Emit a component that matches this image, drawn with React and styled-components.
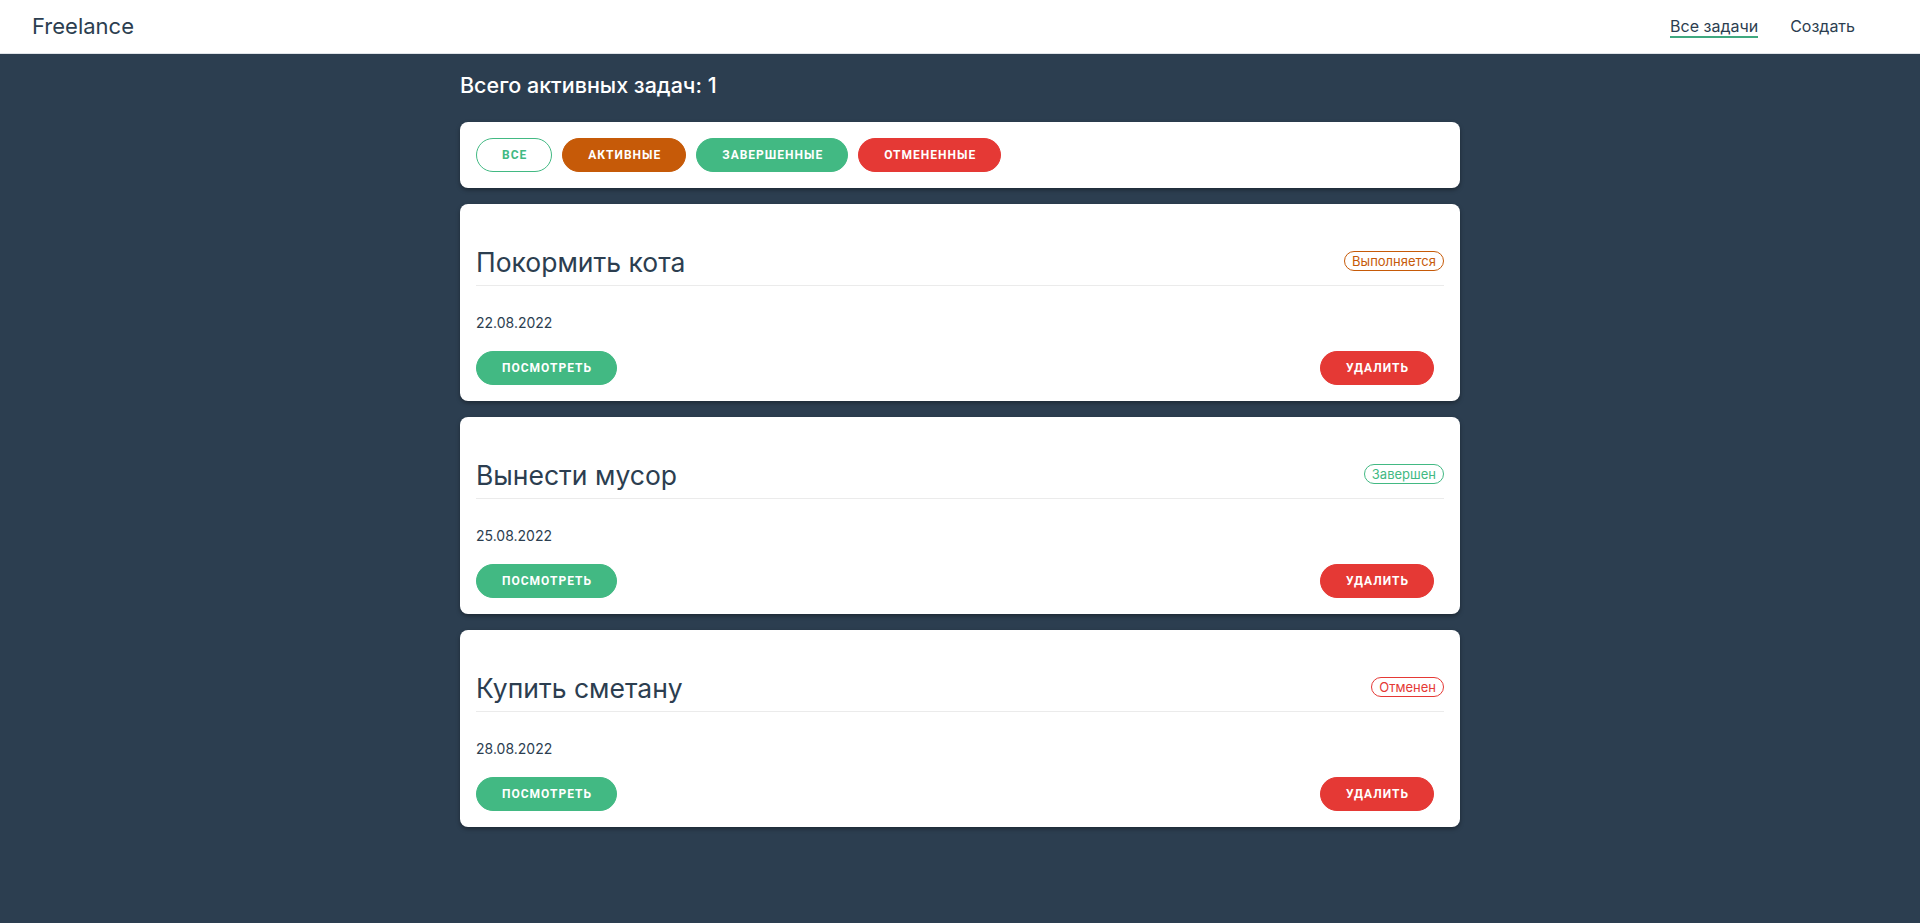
import React from 'react';
import styled, {createGlobalStyle} from 'styled-components';

const colors = {
    dark: '#2c3e50',
    green: '#42b983',
    orange: '#c65a08',
    red: '#e53935',
    line: '#ebebeb',
};

const GlobalStyle = createGlobalStyle`
    html,
    body {
        margin: 0;
        padding: 0;
        background: ${colors.dark};
        font-family: Inter, 'Noto Sans', sans-serif;
        color: ${colors.dark};
        min-height: 100%;
    }
    * {
        box-sizing: border-box;
    }
`;

const Page = styled.div`
    min-height: 923px;
    background: ${colors.dark};
`;

const Header = styled.header`
    height: 54px;
    background: #fff;
    border-bottom: 1px solid #dfe3e8;
    display: flex;
    align-items: center;
    justify-content: space-between;
    padding: 0 65px 0 32px;
`;

const Logo = styled.div`
    font-size: 22px;
    color: ${colors.dark};
    margin-top: -1px;
`;

const Nav = styled.nav`
    display: flex;
    gap: 32px;
`;

const NavLink = styled.a`
    font-size: 16px;
    line-height: 19px;
    color: ${colors.dark};
    text-decoration: none;
    margin-top: 2px;
    border-bottom: 2px solid ${({$active}) => ($active ? '#3fa87f' : 'transparent')};
    cursor: pointer;
`;

const Main = styled.main`
    width: 1000px;
    margin: 0 auto;
    padding-top: 18px;
    display: flex;
    flex-direction: column;
    gap: 16px;
`;

const Total = styled.h2`
    margin: 0 0 8px;
    font-size: 21.5px;
    font-weight: 500;
    color: #fff;
`;

const Card = styled.div`
    background: #fff;
    border-radius: 8px;
    box-shadow: 0 2px 4px rgba(0, 0, 0, 0.35);
`;

const FilterBar = styled(Card)`
    display: flex;
    gap: 10px;
    padding: 16px;
`;

const Pill = styled.button`
    height: 34px;
    padding: 0 24px 0 25px;
    border-radius: 17px;
    font-family: Roboto, 'Liberation Sans', sans-serif;
    font-weight: 700;
    font-size: 12px;
    letter-spacing: 1px;
    text-transform: uppercase;
    cursor: pointer;
    border: 1px solid ${({$color}) => $color};
    background: ${({$color, $outline}) => ($outline ? '#fff' : $color)};
    color: ${({$color, $outline}) => ($outline ? $color : '#fff')};
`;

const TaskCard = styled(Card)`
    padding: 16px;
`;

const TaskHead = styled.div`
    margin-top: 25px;
    padding-bottom: 6px;
    border-bottom: 1px solid ${colors.line};
    display: flex;
    align-items: center;
    justify-content: space-between;
`;

const TaskTitle = styled.h3`
    margin: 0;
    font-size: 26.5px;
    font-weight: 400;
    line-height: 34px;
    color: ${colors.dark};
`;

const Badge = styled.span`
    height: 20px;
    padding: 0 7px;
    border-radius: 10px;
    font-size: 13px;
    line-height: 18px;
    margin-bottom: 2px;
    border: 1px solid ${({$color}) => $color};
    color: ${({$color}) => $color};
`;

const TaskDate = styled.div`
    margin-top: 28px;
    font-size: 14px;
    line-height: 17px;
    color: ${colors.dark};
`;

const Actions = styled.div`
    margin-top: 20px;
    display: flex;
    justify-content: space-between;
    padding-right: 10px;
`;

const statuses = {
    active: {label: 'Выполняется', color: colors.orange},
    done: {label: 'Завершен', color: colors.green},
    cancelled: {label: 'Отменен', color: colors.red},
};

const tasks = [
    {id: 1, title: 'Покормить кота', date: '22.08.2022', status: 'active'},
    {id: 2, title: 'Вынести мусор', date: '25.08.2022', status: 'done'},
    {id: 3, title: 'Купить сметану', date: '28.08.2022', status: 'cancelled'},
];

function Task({task}) {
    const status = statuses[task.status];
    return (
        <TaskCard>
            <TaskHead>
                <TaskTitle>{task.title}</TaskTitle>
                <Badge $color={status.color}>{status.label}</Badge>
            </TaskHead>
            <TaskDate>{task.date}</TaskDate>
            <Actions>
                <Pill $color={colors.green}>Посмотреть</Pill>
                <Pill $color={colors.red}>Удалить</Pill>
            </Actions>
        </TaskCard>
    );
}

export default function App() {
    const activeCount = tasks.filter((t) => t.status === 'active').length;

    return (
        <Page>
            <GlobalStyle />
            <Header>
                <Logo>Freelance</Logo>
                <Nav>
                    <NavLink $active>Все задачи</NavLink>
                    <NavLink>Создать</NavLink>
                </Nav>
            </Header>
            <Main>
                <Total>Всего активных задач: {activeCount}</Total>
                <FilterBar>
                    <Pill $color={colors.green} $outline>
                        Все
                    </Pill>
                    <Pill $color={colors.orange}>Активные</Pill>
                    <Pill $color={colors.green}>Завершенные</Pill>
                    <Pill $color={colors.red}>Отмененные</Pill>
                </FilterBar>
                {tasks.map((task) => (
                    <Task key={task.id} task={task} />
                ))}
            </Main>
        </Page>
    );
}
